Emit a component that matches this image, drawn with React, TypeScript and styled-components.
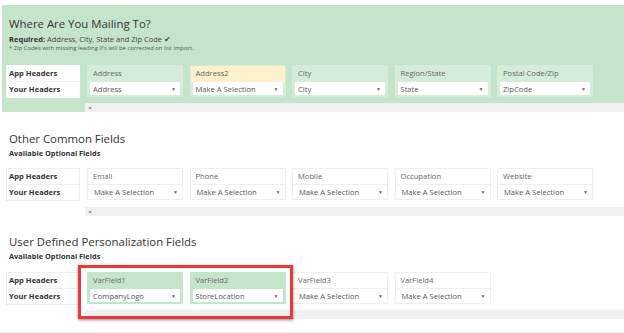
import * as React from 'react'
import styled, { createGlobalStyle } from 'styled-components'

const GlobalStyle = createGlobalStyle`
  body {
    margin: 0;
    background: #fff;
    font-family: "Open Sans", "Liberation Sans", sans-serif;
    color: #333;
  }
`

type Tone = 'green' | 'yellow' | 'plain' | 'picked'

type Field = {
  app: string
  value: string
  tone: Tone
}

const mailing: Field[] = [
  { app: 'Address', value: 'Address', tone: 'green' },
  { app: 'Address2', value: 'Make A Selection', tone: 'yellow' },
  { app: 'City', value: 'City', tone: 'green' },
  { app: 'Region/State', value: 'State', tone: 'green' },
  { app: 'Postal Code/Zip', value: 'ZipCode', tone: 'green' },
]

const common: Field[] = ['Email', 'Phone', 'Mobile', 'Occupation', 'Website'].map(app => ({
  app,
  value: 'Make A Selection',
  tone: 'plain' as Tone,
}))

const custom: Field[] = [
  { app: 'VarField1', value: 'CompanyLogo', tone: 'picked' },
  { app: 'VarField2', value: 'StoreLocation', tone: 'picked' },
  { app: 'VarField3', value: 'Make A Selection', tone: 'plain' },
  { app: 'VarField4', value: 'Make A Selection', tone: 'plain' },
]

const Page = styled.div`
  width: 624px;
  height: 333px;
  overflow: hidden;
  border-bottom: 1px solid #ececec;
  box-sizing: border-box;
`

const Section = styled.section<{ $green?: boolean; $pad: number }>`
  margin-left: 2px;
  margin-top: ${p => (p.$green ? '5px' : '0')};
  padding-top: ${p => p.$pad}px;
  background: ${p => (p.$green ? '#c4e5c9' : 'transparent')};
`

const Title = styled.h2`
  margin: 0 0 0 7px;
  font-size: 11.4px;
  line-height: 16px;
  font-weight: 400;
  color: #333;
  white-space: nowrap;
`

const Required = styled.div`
  margin: 2px 0 0 7px;
  font-size: 7.5px;
  line-height: 10px;
  color: #444;
  b {
    font-weight: 700;
    color: #333;
  }
`

const Note = styled.div`
  margin: 0 0 0 7px;
  font-size: 5.9px;
  line-height: 8px;
  color: #555;
`

const Sub = styled.div`
  margin: 1px 0 0 7px;
  font-size: 7.4px;
  line-height: 10px;
  font-weight: 700;
  color: #333;
`

const Row = styled.div<{ $top: number }>`
  position: relative;
  display: flex;
  gap: 6.5px;
  margin: ${p => p.$top}px 0 0 4px;
`

const Labels = styled.div<{ $boxed?: boolean }>`
  width: 74px;
  margin-right: 0.5px;
  background: #fff;
  border: 1px solid ${p => (p.$boxed ? '#eee' : '#fff')};
  box-sizing: border-box;
`

const LabelCell = styled.div`
  height: 15px;
  padding-left: 2px;
  font-size: 7.6px;
  line-height: 15px;
  font-weight: 700;
  color: #333;
  & + & {
    border-top: 1px solid #efefef;
  }
`

const cardBg: Record<Tone, string> = {
  green: '#d4ecd8',
  yellow: '#d4ecd8',
  plain: '#fff',
  picked: '#c4e5c9',
}

const headBg: Record<Tone, string> = {
  green: '#d4ecd8',
  yellow: '#fdf0cb',
  plain: '#fff',
  picked: '#c4e5c9',
}

const Card = styled.div<{ $tone: Tone }>`
  width: 96px;
  height: 32px;
  box-sizing: border-box;
  background: ${p => cardBg[p.$tone]};
  border: 1px solid ${p => (p.$tone === 'plain' ? '#eee' : 'transparent')};
  border-radius: 1px;
`

const CardHead = styled.div<{ $tone: Tone }>`
  height: 15px;
  padding-left: 5px;
  font-size: 7.6px;
  line-height: 15px;
  color: #666;
  background: ${p => headBg[p.$tone]};
  border-bottom: 1px solid ${p => (p.$tone === 'plain' ? '#efefef' : headBg[p.$tone])};
`

const SelectWrap = styled.div<{ $tone: Tone }>`
  padding: ${p => (p.$tone === 'plain' ? '0' : '0 2px 0 2px')};
`

const Select = styled.div<{ $inset: boolean }>`
  display: flex;
  align-items: center;
  justify-content: space-between;
  height: ${p => (p.$inset ? '13px' : '14px')};
  padding: 0 4px 0 ${p => (p.$inset ? '3px' : '6px')};
  background: #fff;
  font-size: 7.6px;
  color: #555;
`

const Caret = styled.span`
  font-size: 5px;
  color: #666;
`

const Scroll = styled.div<{ $top: number }>`
  display: flex;
  align-items: center;
  height: 9px;
  margin: ${p => p.$top}px 0 0 83px;
  padding-left: 3px;
  background: #f0f0f0;
  font-size: 4px;
  color: #999;
`

const Marker = styled.div`
  position: absolute;
  left: 72px;
  top: -7px;
  width: 215px;
  height: 54px;
  box-sizing: border-box;
  border: 3px solid #e8393d;
  box-shadow: 0 1px 3px rgba(0, 0, 0, 0.45);
  pointer-events: none;
`

const FieldCard: React.FC<{ field: Field }> = ({ field }) => {
  const inset = field.tone !== 'plain'
  return (
    <Card $tone={field.tone}>
      <CardHead $tone={field.tone}>{field.app}</CardHead>
      <SelectWrap $tone={field.tone}>
        <Select $inset={inset}>
          {field.value}
          <Caret>▼</Caret>
        </Select>
      </SelectWrap>
    </Card>
  )
}

const FieldRow: React.FC<{ fields: Field[]; top: number; boxed?: boolean; marked?: boolean }> = ({
  fields,
  top,
  boxed,
  marked,
}) => (
  <Row $top={top}>
    <Labels $boxed={boxed}>
      <LabelCell>App Headers</LabelCell>
      <LabelCell>Your Headers</LabelCell>
    </Labels>
    {fields.map(f => (
      <FieldCard field={f} key={f.app} />
    ))}
    {marked && <Marker />}
  </Row>
)

const App: React.FC = () => (
  <Page>
    <GlobalStyle />
    <Section $green $pad={11}>
      <Title>Where Are You Mailing To?</Title>
      <Required>
        <b>Required:</b> Address, City, State and Zip Code ✔
      </Required>
      <Note>* Zip Codes with missing leading 0's will be corrected on list import.</Note>
      <FieldRow fields={mailing} top={13} />
      <Scroll $top={5}>◀</Scroll>
    </Section>
    <Section $pad={19}>
      <Title>Other Common Fields</Title>
      <Sub>Available Optional Fields</Sub>
      <FieldRow fields={common} top={10} boxed />
      <Scroll $top={6}>◀</Scroll>
    </Section>
    <Section $pad={18}>
      <Title>User Defined Personalization Fields</Title>
      <Sub>Available Optional Fields</Sub>
      <FieldRow fields={custom} top={11} boxed marked />
      <Scroll $top={5} />
    </Section>
  </Page>
)

export default App
